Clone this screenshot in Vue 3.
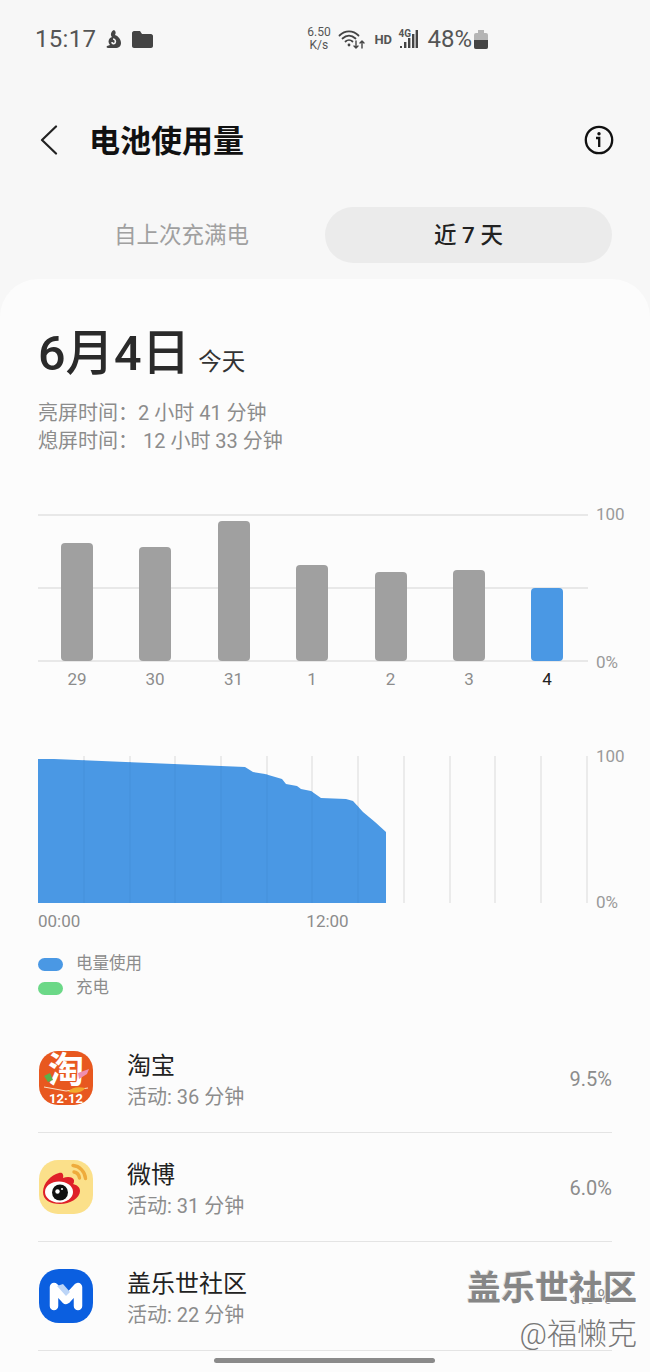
<template>
  <div class="page">
    <div class="status">
      <div class="status-left">
        <span class="clock">15:17</span>
        <svg class="notif" width="18" height="20" viewBox="0 0 18 20">
          <path d="M9 1c2 1 2 3 1 5 3 1 6 4 6 8 0 3-2 5-6 5H3c-1 0-2-1-1-2l3-1c-2-2-2-5 0-7l2-1C5 6 6 2 9 1z" fill="#444" />
          <path d="M8 10c2 0 3 2 2 4-1 1-3 1-3-1" fill="none" stroke="#f7f7f7" stroke-width="1.6" />
        </svg>
        <svg class="notif" width="21" height="17" viewBox="0 0 21 17">
          <path d="M0 2c0-1 1-2 2-2h6l2 3h9c1 0 2 1 2 2v10c0 1-1 2-2 2H2c-1 0-2-1-2-2z" fill="#444" />
        </svg>
      </div>
      <div class="status-right">
        <div class="speed"><span>6.50</span><span>K/s</span></div>
        <svg class="wifi" width="27" height="22" viewBox="0 0 27 22" fill="none" stroke="#444" stroke-linecap="round">
          <path d="M1.500 7.500C7 2 15 2 20.500 7.500" stroke-width="1.800" />
          <path d="M4.500 10.500C8.500 6.800 13.500 6.800 17.500 10.500" stroke-width="1.800" />
          <path d="M7.500 13.500c2-1.800 5-1.800 7 0" stroke-width="1.800" />
          <circle cx="11" cy="17" r="1.400" fill="#444" stroke="none" />
          <path d="M18 13v7m-2-2 2 2 2-2M24 20v-7m-2 2 2-2 2 2" stroke-width="1.400" />
        </svg>
        <span class="hd">HD</span>
        <div class="net">
          <span class="lte">4G</span>
          <svg width="18" height="22" viewBox="0 0 18 22" fill="#444">
            <rect x="0" y="18" width="2" height="2" />
            <rect x="4" y="14" width="2.400" height="6" />
            <rect x="8" y="10" width="2.400" height="10" />
            <rect x="12" y="6" width="2.400" height="14" />
            <rect x="15.600" y="2" width="2.400" height="18" />
          </svg>
        </div>
        <span class="level">48%</span>
        <div class="battery"><div class="battery-fill"></div></div>
      </div>
    </div>

    <header class="topbar">
      <svg class="back" width="18" height="30" viewBox="0 0 18 30" fill="none" stroke="#222" stroke-width="2.200" stroke-linecap="round" stroke-linejoin="round">
        <path d="M16 1.500 2 15l14 13.500" />
      </svg>
      <h1 class="title">电池使用量</h1>
      <svg class="info" width="30" height="30" viewBox="0 0 30 30" fill="none" stroke="#111">
        <circle cx="15" cy="15" r="13.200" stroke-width="2.300" />
        <circle cx="15" cy="8.800" r="1.700" fill="#111" stroke="none" />
        <path d="M12 13h3.200v9" stroke-width="2.300" />
      </svg>
    </header>

    <div class="tabs">
      <div class="tab">自上次充满电</div>
      <div class="tab active">近 7 天</div>
    </div>

    <main class="card">
      <div class="date">
        <span class="date-main">6月4日</span>
        <span class="date-sub">今天</span>
      </div>
      <div class="times">
        <div>亮屏时间：2 小时 41 分钟</div>
        <div>熄屏时间： 12 小时 33 分钟</div>
      </div>

      <div class="chart week">
        <div class="plot">
          <svg width="550" height="148" viewBox="0 0 550 148">
            <line v-for="y in [1, 74, 147]" :key="y" x1="0" x2="550" :y1="y" :y2="y" stroke="#e8e8e8" stroke-width="2" />
            <rect
              v-for="(d, i) in days"
              :key="d.label"
              :x="d.x - 16"
              :y="147 - d.h"
              width="32"
              :height="d.h"
              rx="4"
              :fill="i === days.length - 1 ? '#4a98e4' : '#a0a0a0'"
            />
          </svg>
          <div class="day-labels">
            <span
              v-for="d in days"
              :key="d.label"
              class="day"
              :class="{ today: d.label === '4' }"
              :style="{ width: d.w + 'px' }"
            >{{ d.label }}</span>
          </div>
        </div>
        <div class="scale week-scale"><span>100</span><span>0%</span></div>
      </div>

      <div class="chart day-chart">
        <div class="plot">
          <svg width="550" height="148" viewBox="0 0 550 148">
            <defs>
              <clipPath id="area"><polygon :points="areaPoints" /></clipPath>
            </defs>
            <line v-for="x in gridX" :key="x" :x1="x" :x2="x" y1="0" y2="147" stroke="#e6e6e6" stroke-width="1.500" />
            <polygon :points="areaPoints" fill="#4a98e4" />
            <g clip-path="url(#area)">
              <line v-for="x in gridX" :key="'in' + x" :x1="x" :x2="x" y1="0" y2="147" stroke="#4590da" stroke-width="1" />
            </g>
          </svg>
          <div class="hours"><span>00:00</span><span class="noon">12:00</span></div>
        </div>
        <div class="scale hour-scale"><span>100</span><span>0%</span></div>
      </div>

      <div class="legend">
        <div class="legend-row"><i class="swatch use"></i>电量使用</div>
        <div class="legend-row"><i class="swatch charge"></i>充电</div>
      </div>

      <ul class="apps">
        <li class="app">
          <svg class="app-icon" width="56" height="56" viewBox="0 0 56 56">
            <rect x="1" y="1" width="54" height="54" rx="19" fill="#e8581f" />
            <text x="28" y="33" text-anchor="middle" class="icon-char">淘</text>
            <path d="M6 37 28 41 50 38" fill="none" stroke="#fbe3c8" stroke-width="1" />
            <path d="M6 26l6-3 3 7-5 2z" fill="#5ab04a" />
            <path d="M40 23l11-4-2 5-8 5z" fill="#ef8fb0" />
            <path d="M30 42c3-4 9-6 17-4-2 4-9 6-17 4z" fill="#f2a92c" />
            <text x="28" y="53" text-anchor="middle" class="icon-date">12·12</text>
          </svg>
          <div class="app-text">
            <div class="app-name">淘宝</div>
            <div class="app-time">活动: 36 分钟</div>
          </div>
          <div class="app-pct">9.5%</div>
        </li>
        <li class="app">
          <svg class="app-icon" width="56" height="56" viewBox="0 0 56 56">
            <rect x="1" y="1" width="54" height="54" rx="19" fill="#fbe08a" />
            <path d="M35 6.500c6.500.5 12 6 12.500 13" fill="none" stroke="#eeab3c" stroke-width="3.400" stroke-linecap="round" />
            <path d="M36 13c3 .5 5 3 5.500 6" fill="none" stroke="#eeab3c" stroke-width="3.400" stroke-linecap="round" />
            <path d="M5 33c0-9 8-17 16-19 3-1 5 1 4 5 5-2 10-1 11 2 0 2 0 3-1 4 4 1 7 3 7 7 0 7-10 13-20 13S5 41 5 33z" fill="#df2029" />
            <ellipse cx="21" cy="33" rx="14" ry="10.500" fill="#fff" />
            <circle cx="22" cy="33.500" r="8" fill="#111" />
            <circle cx="19.500" cy="32.500" r="2.200" fill="#fff" />
            <circle cx="24" cy="30" r="1" fill="#fff" />
          </svg>
          <div class="app-text">
            <div class="app-name">微博</div>
            <div class="app-time">活动: 31 分钟</div>
          </div>
          <div class="app-pct">6.0%</div>
        </li>
        <li class="app">
          <svg class="app-icon" width="56" height="56" viewBox="0 0 56 56">
            <rect x="1" y="1" width="54" height="54" rx="20" fill="#0b5fe0" />
            <path d="M16 38V19l12 13 12-13v19" fill="none" stroke="#fff" stroke-width="8.500" stroke-linecap="round" stroke-linejoin="round" />
            <path d="M19 18l9 10 4-4-7-8z" fill="#bcd5f7" />
          </svg>
          <div class="app-text">
            <div class="app-name">盖乐世社区</div>
            <div class="app-time">活动: 22 分钟</div>
          </div>
          <div class="app-pct">3.9%</div>
        </li>
      </ul>
    </main>

    <div class="watermark">
      <div class="mark-main">盖乐世社区</div>
      <div class="mark-user">@福懒克</div>
    </div>
    <div class="home-bar"></div>
  </div>
</template>

<script setup>
const heights = [118, 114, 140, 96, 89, 91, 73]
const centers = [39, 117, 196, 274, 353, 431, 509]
const labels = ['29', '30', '31', '1', '2', '3', '4']

// label cells are as wide as the spacing between bars
const days = heights.map((h, i) => ({
  h,
  x: centers[i],
  label: labels[i],
  w: i === 0 ? 78 : centers[i] - centers[i - 1],
}))

const gridX = [46, 92, 137, 183, 229, 274, 320, 366, 412, 457, 503, 549]

const curve = [
  [0, 3], [16, 3], [207, 11], [215, 16], [227, 18], [244, 23], [248, 28],
  [259, 30], [263, 33], [273, 35], [283, 42], [308, 43], [315, 45],
  [325, 56], [337, 66], [348, 76], [348, 147], [0, 147],
]
const areaPoints = curve.map((p) => p.join(',')).join(' ')
</script>

<style>
body {
  background: #f7f7f7;
}
</style>

<style scoped>
.page {
  position: relative;
  width: 650px;
  height: 1372px;
  overflow: hidden;
  background: #f7f7f7;
  font-family: Roboto, "Noto Sans CJK SC", sans-serif;
  color: #222;
}

/* status bar */
.status {
  height: 78px;
  display: flex;
  align-items: center;
  justify-content: space-between;
  padding: 0 162px 0 35px;
  box-sizing: border-box;
  color: #555;
}
.status-left, .status-right { display: flex; align-items: center; }
.clock { font-size: 24px; letter-spacing: 0.3px; width: 70px; }
.notif { margin-right: 9px; }
.speed {
  display: flex;
  flex-direction: column;
  align-items: center;
  font-size: 12px;
  line-height: 13px;
  width: 25px;
  margin-right: 7px;
}
.wifi { margin-right: 9px; }
.hd { font-size: 13px; font-weight: 700; width: 16px; margin-right: 8px; }
.net { position: relative; display: flex; width: 20px; justify-content: flex-end; margin-right: 9px; }
.lte { position: absolute; left: 0; top: 0; font-size: 10px; font-weight: 700; }
.level { font-size: 24px; margin-right: 2px; }
.battery {
  position: relative;
  width: 14px;
  height: 16px;
  margin-top: 3px;
  border-radius: 2px;
  background: #b5b5b5;
}
.battery::before {
  content: "";
  position: absolute;
  left: 4px;
  top: -3px;
  width: 6px;
  height: 3px;
  background: #b5b5b5;
}
.battery-fill { position: absolute; left: 0; right: 0; bottom: 0; height: 9px; border-radius: 0 0 2px 2px; background: #444; }

/* header */
.topbar {
  height: 60px;
  margin-top: 32px;
  display: flex;
  align-items: center;
  padding: 0 36px 0 40px;
}
.back { margin-right: 31px; }
.title { flex: 1; margin: 0 0 4px; font-size: 31px; font-weight: 700; color: #111; }

/* tabs */
.tabs {
  display: flex;
  margin: 37px 38px 0;
}
.tab {
  flex: 1;
  height: 56px;
  line-height: 56px;
  text-align: center;
  font-size: 22.500px;
  color: #a0a0a0;
  border-radius: 28px;
}
.tab.active { background: #ebebeb; color: #222; font-weight: 500; }

/* card */
.card {
  height: 1100px;
  margin-top: 16px;
  padding: 44px 38px 0;
  box-sizing: border-box;
  background: #fcfcfc;
  border-radius: 38px 38px 0 0;
}
.date { display: flex; align-items: baseline; }
.date-main { font-size: 48.500px; line-height: 62px; font-weight: 500; color: #2a2a2a; }
.date-sub { margin-left: 8px; font-size: 23.500px; color: #333; }
.times {
  margin-top: 14px;
  font-size: 20px;
  line-height: 28px;
  color: #8c8c8c;
}

.chart { display: flex; }
.plot { width: 550px; flex: none; }
.plot svg { display: block; }
.week { margin-top: 59px; }
.day-labels { display: flex; margin-top: 6px; }
.day {
  font-size: 17px;
  line-height: 22px;
  text-align: center;
  color: #8c8c8c;
}
.today { color: #222; }
.scale {
  margin-left: 8px;
  display: flex;
  flex-direction: column;
  justify-content: space-between;
  font-size: 17px;
  line-height: 22px;
  color: #9a9a9a;
}
.week-scale { margin-top: -11px; height: 170px; }
.hour-scale { margin-top: -11px; height: 168px; }
.day-chart { margin-top: 66px; }
.hours { display: flex; margin-top: 6px; font-size: 17px; line-height: 22px; color: #8c8c8c; }
.noon { margin-left: 226px; }

.legend { margin-top: 20px; font-size: 16.500px; line-height: 24px; color: #8c8c8c; }
.legend-row { display: flex; align-items: center; }
.swatch { width: 25px; height: 13px; border-radius: 7px; margin-right: 13px; }
.use { background: #4a98e4; }
.charge { background: #6bd887; }

/* app list */
.apps { list-style: none; margin: 24px 0 0; padding: 0; }
.app {
  height: 109px;
  box-sizing: border-box;
  display: flex;
  align-items: center;
  border-bottom: 1px solid #e4e4e4;
}
.app-icon { flex: none; margin-right: 33px; }
.app-text { flex: 1; margin-top: 5px; }
.app-name { font-size: 24px; line-height: 33px; color: #222; }
.app-time { font-size: 20px; line-height: 28px; color: #8c8c8c; }
.app-pct { font-size: 20px; color: #8c8c8c; margin-top: 2px; }
.icon-char { font-size: 36px; font-weight: 700; fill: #fff; }
.icon-date { font-size: 13px; font-weight: 700; fill: #fff; }

/* watermark sits over the list */
.watermark {
  position: absolute;
  right: 13px;
  top: 1265px;
  text-align: right;
}
.mark-main {
  font-size: 34px;
  line-height: 46px;
  font-weight: 700;
  color: #868686;
  text-shadow: 1px 1px 0 #fff, -1px -1px 0 #ddd;
}
.mark-user { margin-top: 4px; font-size: 30px; line-height: 38px; color: #777; font-weight: 300; }

.home-bar {
  position: absolute;
  left: 214px;
  bottom: 9px;
  width: 221px;
  height: 5px;
  border-radius: 3px;
  background: #8a8a8a;
}
</style>
